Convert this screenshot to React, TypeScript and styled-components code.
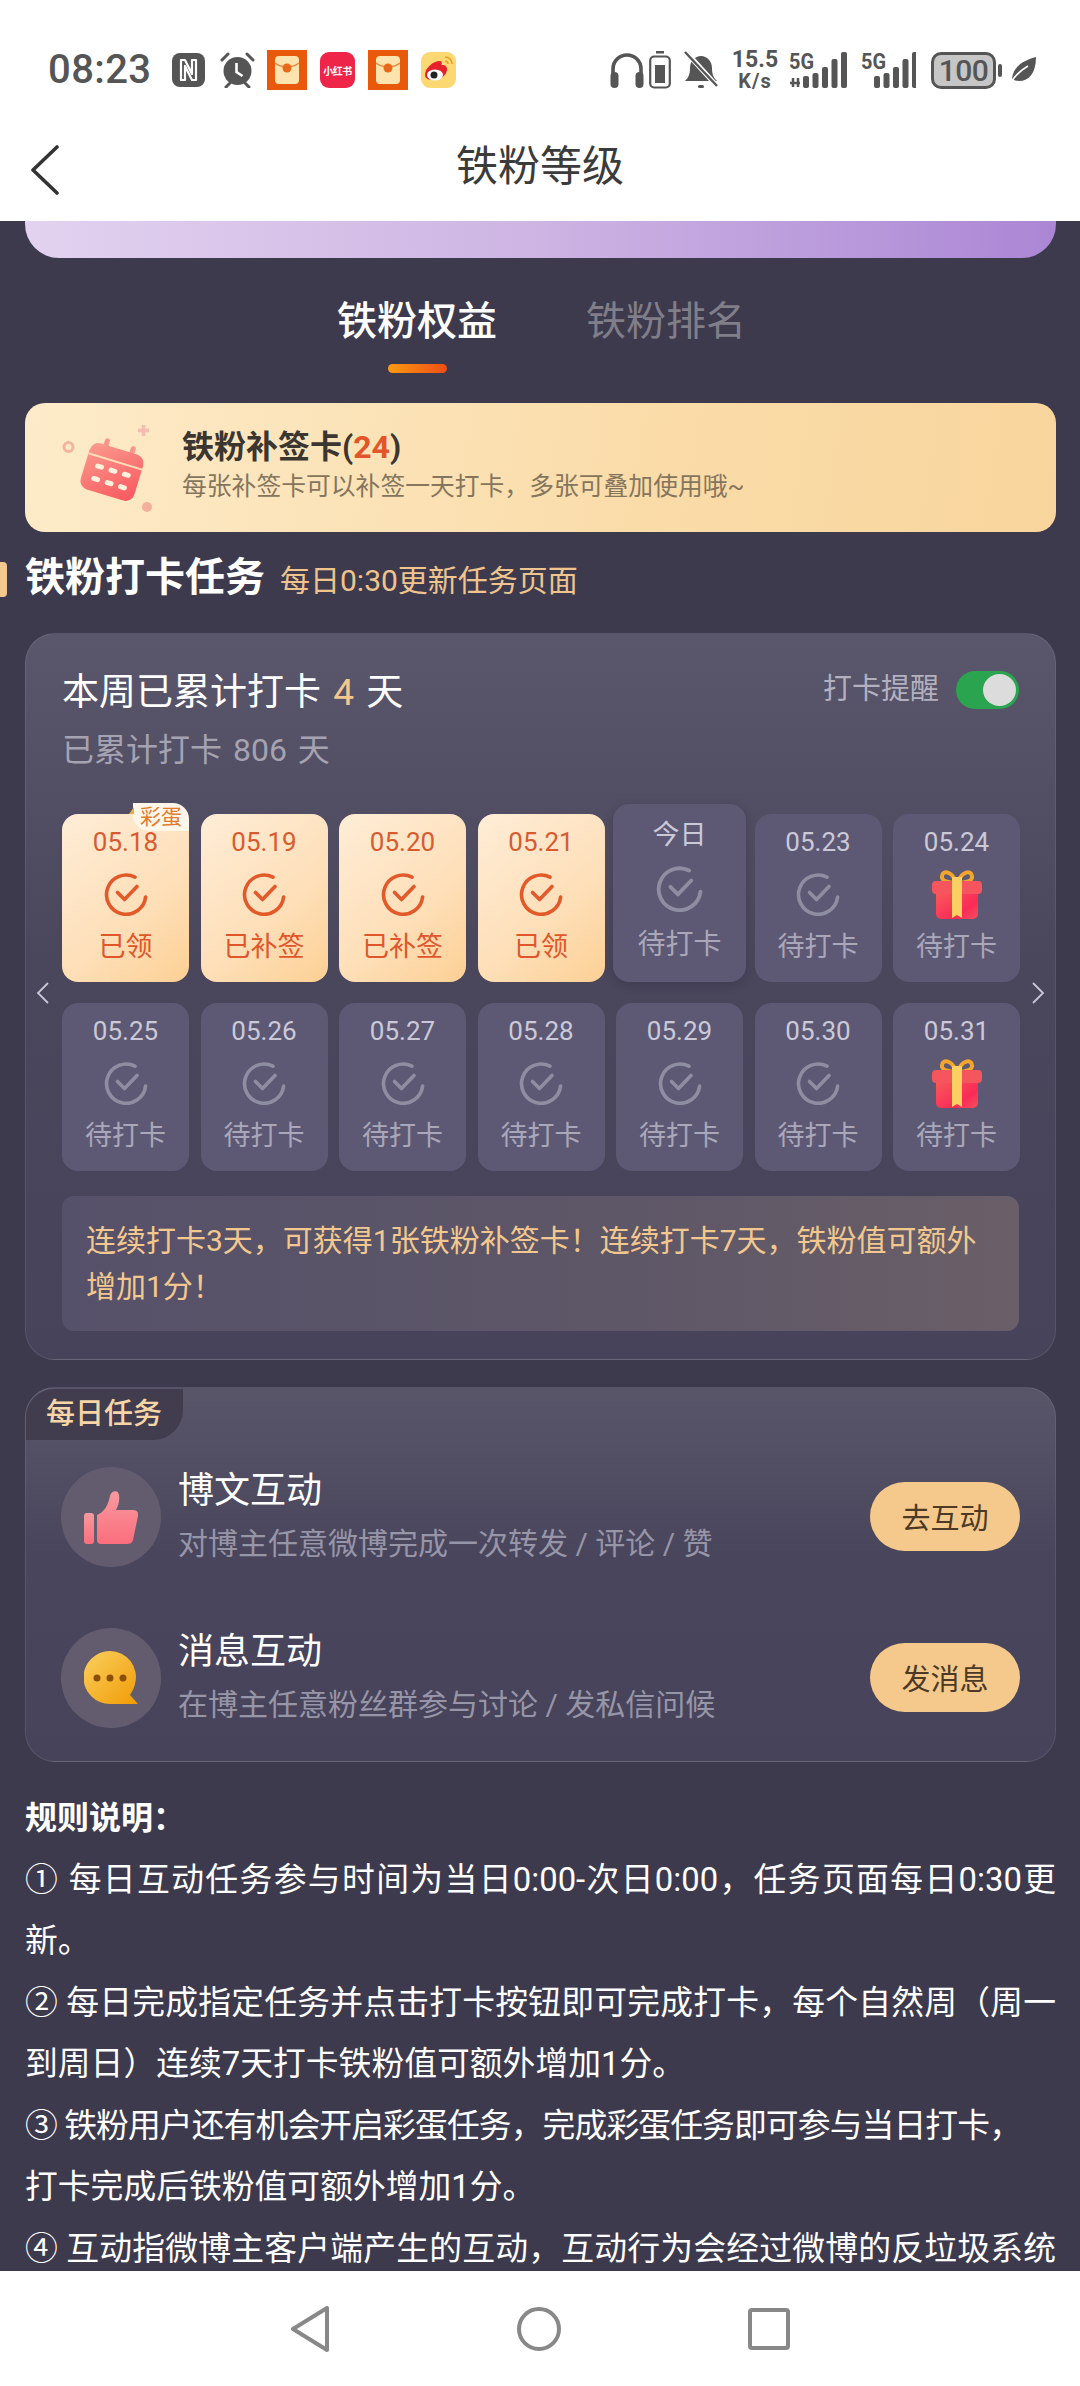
import React from 'react'
import styled, { createGlobalStyle } from 'styled-components'

const GlobalStyle = createGlobalStyle`
    html, body {
        margin: 0;
        padding: 0;
        background: #fff;
    }
    * {
        box-sizing: border-box;
    }
    body {
        font-family: Roboto, "Noto Sans CJK SC", sans-serif;
    }
`

const Page = styled.div`
    width: 1080px;
    height: 2386px;
    display: flex;
    flex-direction: column;
    overflow: hidden;
`

const StatusBar = styled.div`
    height: 113px;
    padding: 48px 44px 0 48px;
    display: flex;
    justify-content: space-between;
    align-items: flex-start;
    background: #fff;
    color: #555;
`

const StatusGroup = styled.div`
    height: 44px;
    display: flex;
    align-items: center;
`

const Clock = styled.span`
    font-size: 40px;
    line-height: 44px;
    font-weight: 500;
    width: 124px;
    letter-spacing: 0.4px;
`

const XhsIcon = styled.span`
    width: 35px;
    height: 36px;
    margin-left: 13px;
    border-radius: 9px;
    background: #ee2449;
    color: #fff;
    font-size: 10px;
    font-weight: 700;
    display: flex;
    align-items: center;
    justify-content: center;
    white-space: nowrap;
    letter-spacing: -0.5px;
`

const Speed = styled.span`
    width: 48px;
    margin: 0 10px 0 13px;
    display: flex;
    flex-direction: column;
    align-items: center;
    font-weight: 700;
`

const SpeedValue = styled.span`
    font-size: 23px;
    line-height: 22px;
`

const SpeedUnit = styled.span`
    font-size: 20px;
    line-height: 20px;
    letter-spacing: 1px;
`

const BatteryBody = styled.span`
    width: 65px;
    height: 37px;
    margin-left: 15px;
    border: 3px solid #555;
    border-radius: 10px;
    background: #c6c6c6;
    font-size: 30px;
    line-height: 31px;
    font-weight: 500;
    text-align: center;
    letter-spacing: -0.5px;
`

const BatteryNub = styled.span`
    width: 4px;
    height: 13px;
    margin: 0 9px 0 2px;
    border-radius: 2px;
    background: #555;
`

const NavHeader = styled.header`
    height: 108px;
    padding: 0 31px;
    display: grid;
    grid-template-columns: 1fr auto 1fr;
    align-items: center;
    background: #fff;
`

const NavTitle = styled.h1`
    margin: 0;
    font-size: 42px;
    line-height: 56px;
    font-weight: 400;
    color: #3b3b3b;
`

const Main = styled.main`
    flex: 1;
    min-height: 0;
    overflow: hidden;
    padding: 0 24px 0 25px;
    background: #3d3a4e;
`

const Hero = styled.div`
    height: 37px;
    border-radius: 0 0 34px 34px;
    background: linear-gradient(90deg, #e2d2ef 0%, #cdb4e3 50%, #ab86d5 100%);
`

const Tabs = styled.div`
    margin-top: 36px;
    padding-left: 312px;
    display: flex;
    gap: 89px;
`

const Tab = styled.div<{ $active?: boolean }>`
    display: flex;
    flex-direction: column;
    align-items: center;
    font-size: 40px;
    line-height: 56px;
    font-weight: ${p => (p.$active ? 500 : 400)};
    color: ${p => (p.$active ? '#fff' : '#807e88')};
`

const TabLine = styled.span`
    width: 59px;
    height: 9px;
    margin-top: 14px;
    border-radius: 5px;
    background: linear-gradient(90deg, #fb9a12, #ee4d16);
`

const Banner = styled.section`
    height: 129px;
    margin-top: 30px;
    padding: 22px 0 0 37px;
    display: flex;
    gap: 28px;
    border-radius: 20px;
    background: linear-gradient(100deg, #fdebc9 0%, #fadca9 60%, #f8d59c 100%);
`

const BannerTitle = styled.div`
    font-size: 32px;
    line-height: 44px;
    font-weight: 700;
    color: #3b3630;
    white-space: nowrap;
`

const BannerCount = styled.span`
    color: #e2552b;
`

const BannerNote = styled.div`
    margin-top: 1px;
    font-size: 24.8px;
    line-height: 34px;
    color: #86755d;
    white-space: nowrap;
`

const SectionRow = styled.div`
    position: relative;
    margin-top: 21px;
    height: 50px;
    display: flex;
    align-items: baseline;
    gap: 15px;
`

const SectionMark = styled.span`
    position: absolute;
    left: -25px;
    top: 9px;
    width: 7px;
    height: 35px;
    border-radius: 0 4px 4px 0;
    background: #f3c98d;
`

const SectionTitle = styled.h2`
    margin: 0;
    font-size: 40px;
    line-height: 50px;
    font-weight: 700;
    color: #fff;
`

const SectionNote = styled.span`
    font-size: 30px;
    color: #efc48d;
`

const Card = styled.section`
    position: relative;
    margin-top: 30px;
    padding: 34px 36px 28px;
    border: 1px solid rgba(255, 255, 255, 0.09);
    border-radius: 30px;
    background: linear-gradient(180deg, #5a566b 0%, #4a465c 45%, #47435a 100%);
`

const CardHead = styled.div`
    display: flex;
    justify-content: space-between;
    align-items: flex-start;
`

const CardTitle = styled.div`
    font-size: 37px;
    line-height: 50px;
    color: #fff;
`

const CardSub = styled.div`
    margin-top: 10px;
    font-size: 32px;
    line-height: 44px;
    color: #a5a3b2;
`

const Accent = styled.span`
    margin: 0 3px;
    color: #f3c88e;
`

const Count = styled.span`
    margin: 0 3px;
`

const Reminder = styled.div`
    display: flex;
    align-items: center;
    gap: 17px;
    font-size: 29px;
    line-height: 40px;
    color: #b3b1bf;
`

const Toggle = styled.span`
    width: 63px;
    height: 38px;
    margin-top: 3px;
    padding: 3px;
    display: flex;
    justify-content: flex-end;
    border-radius: 19px;
    background: #2aa44f;
`

const Knob = styled.span`
    width: 33px;
    height: 32px;
    border-radius: 50%;
    background: #dcdcdc;
`

const DayGrid = styled.div`
    margin-top: 42px;
    display: grid;
    grid-template-columns: repeat(7, 127px);
    grid-auto-rows: 168px;
    column-gap: 11.5px;
    row-gap: 21px;
`

const DayCell = styled.div<{ $done?: boolean; $today?: boolean }>`
    position: relative;
    padding-top: ${p => (p.$today ? 17 : 14)}px;
    margin: ${p => (p.$today ? '-10px -3px 0' : '0')};
    display: flex;
    flex-direction: column;
    align-items: center;
    border-radius: 16px;
    background: ${p => (p.$done ? 'linear-gradient(140deg, #feedd7 0%, #fedfb8 60%, #fcd094 100%)' : '#5d5975')};
    box-shadow: ${p => (p.$today ? '0 3px 10px rgba(30, 27, 45, 0.22)' : 'none')};
    z-index: ${p => (p.$today ? 1 : 0)};
`

const DayDate = styled.span<{ $done?: boolean; $today?: boolean }>`
    font-size: ${p => (p.$today ? 27 : 26)}px;
    line-height: 28px;
    color: ${p => (p.$done ? '#d65c30' : '#cbc9d8')};
`

const IconSlot = styled.span`
    height: 44px;
    margin-top: 16px;
    display: flex;
    align-items: center;
    justify-content: center;
`

const TodaySlot = styled(IconSlot)`
    height: 47px;
`

const DayLabel = styled.span<{ $done?: boolean; $today?: boolean }>`
    margin-top: ${p => (p.$today ? 16 : 14)}px;
    font-size: ${p => (p.$today ? 28 : 27)}px;
    line-height: 34px;
    color: ${p => (p.$done ? '#e0562a' : '#a9a7b9')};
`

const EggBadge = styled.span`
    position: absolute;
    top: -11px;
    right: 0;
    width: 56px;
    height: 28px;
    border-radius: 0 16px 0 16px;
    background: #fff6ea;
    font-size: 21px;
    line-height: 28px;
    text-align: center;
    color: #e47a2c;

    &::before {
        content: '';
        position: absolute;
        left: -4px;
        top: 4px;
        border-style: solid;
        border-width: 0 0 7px 5px;
        border-color: transparent transparent #e9b04a transparent;
    }
`

const PagerArrow = styled.span<{ $side: 'left' | 'right' }>`
    position: absolute;
    top: 348px;
    ${p => p.$side}: 10px;
    width: 13px;
    height: 22px;
    display: flex;
`

const TipBox = styled.div`
    margin-top: 25px;
    height: 135px;
    padding: 22px 24px 0 24px;
    border-radius: 12px;
    background: linear-gradient(90deg, #56516a 0%, #5e5767 60%, #6a5f68 100%);
    font-size: 30px;
    line-height: 46px;
    color: #f3c88e;
`

const TaskCard = styled.section`
    position: relative;
    height: 375px;
    margin-top: 27px;
    padding: 79px 35px 0;
    border: 1px solid rgba(255, 255, 255, 0.09);
    border-radius: 30px;
    background: linear-gradient(180deg, #595569 0%, #49455c 45%, #47435a 100%);
    display: flex;
    flex-direction: column;
    gap: 61px;
`

const TaskBadge = styled.span`
    position: absolute;
    top: 1px;
    left: 0;
    width: 157px;
    height: 51px;
    padding-left: 20px;
    border-radius: 28px 0 30px 0;
    background: #413d4f;
    font-size: 29px;
    line-height: 50px;
    font-weight: 500;
    color: #f8d5a6;
`

const TaskRow = styled.div`
    display: flex;
    align-items: center;
`

const TaskIcon = styled.span`
    width: 100px;
    height: 100px;
    flex: none;
    border-radius: 50%;
    background: #635c6e;
    display: flex;
    align-items: center;
    justify-content: center;
`

const TaskText = styled.div`
    flex: 1;
    margin-left: 17px;
    margin-top: -3px;
`

const TaskTitle = styled.div`
    font-size: 36px;
    line-height: 50px;
    color: #fff;
`

const TaskNote = styled.div`
    margin-top: 6px;
    font-size: 30px;
    line-height: 44px;
    color: #9795a8;
`

const TaskButton = styled.button`
    width: 150px;
    height: 69px;
    margin-top: -2px;
    border: 0;
    border-radius: 35px;
    background: #f5c98b;
    font-family: inherit;
    font-size: 29px;
    color: #4c3a26;
`

const Rules = styled.section`
    margin-top: 26px;
    font-size: 32.8px;
    line-height: 61.5px;
    color: #fff;
`

const RulesTitle = styled.div`
    font-size: 32px;
    font-weight: 700;
`

const RuleLine = styled.div<{ $fit?: 'full' | 'tight' }>`
    text-align-last: ${p => (p.$fit === 'full' ? 'justify' : 'auto')};
    letter-spacing: ${p => (p.$fit === 'tight' ? '-0.9px' : '0')};
`

const BottomBar = styled.nav`
    height: 115px;
    flex: none;
    padding: 35px 290px 0 291px;
    display: flex;
    justify-content: space-between;
    align-items: flex-start;
    background: #fff;
`

const SignalSvg = styled.svg<{ $gap: number }>`
    margin: -4px 0 0 ${p => p.$gap}px;
`

const CheckRing = ({ color, size = 44 }: { color: string; size?: number }) => (
    <svg width={size} height={size} viewBox="0 0 44 44" fill="none" stroke={color} strokeWidth="3.6" strokeLinecap="round" strokeLinejoin="round">
        <path d="M31 5.2A19.6 19.6 0 1 0 41.6 25" />
        <path d="M13.5 20.5 20.5 27.5 33 14.5" />
    </svg>
)

const Gift = () => (
    <svg width="50" height="50" viewBox="0 0 50 50" style={{ margin: '-3px 0' }}>
        <defs>
            <linearGradient id="giftBody" x1="0" y1="0" x2="1" y2="1">
                <stop offset="0" stopColor="#f8605a" />
                <stop offset="0.7" stopColor="#fb2a57" />
                <stop offset="1" stopColor="#f2505e" />
            </linearGradient>
        </defs>
        <path d="M24 13C20 2 11 1 10 7c-1 5 7 7 14 7zM26 13c4-11 13-12 14-6 1 5-7 7-14 7z" fill="none" stroke="#f4a52c" strokeWidth="4" />
        <rect x="4" y="19" width="42" height="31" rx="5" fill="url(#giftBody)" />
        <rect x="0" y="12" width="50" height="13" rx="4" fill="#f5555c" />
        <path d="M20 8h10v41l-5-3-5 3z" fill="#fbcf62" />
    </svg>
)

const Envelope = ({ first }: { first?: boolean }) => (
    <svg width="40" height="40" viewBox="0 0 40 40" style={{ marginLeft: first ? 12 : 13 }}>
        <rect width="40" height="40" fill="#e9590c" />
        <rect x="8" y="6" width="24" height="28" rx="4" fill="#fde3ad" />
        <path d="M8 13c6 5 18 5 24 0" fill="none" stroke="#e58a3c" strokeWidth="1.4" />
        <circle cx="20" cy="18" r="4.5" fill="#e9691c" />
    </svg>
)

const NfcIcon = () => (
    <svg width="33" height="34" viewBox="0 0 33 34" style={{ marginRight: 15 }}>
        <rect width="33" height="34" rx="8" fill="#555" />
        <path d="M9 7h4l7 14V7h4v20h-4l-7-14v14H9z" fill="none" stroke="#fff" strokeWidth="2.2" strokeLinejoin="round" />
    </svg>
)

const AlarmIcon = () => (
    <svg width="35" height="36" viewBox="0 0 35 36">
        <circle cx="17.5" cy="19" r="14" fill="#555" />
        <path d="M2 8 8 2M33 8l-6-6M6 35l4-4M29 35l-4-4" stroke="#555" strokeWidth="3" strokeLinecap="round" />
        <path d="M16.5 11v9l6 4" fill="none" stroke="#fff" strokeWidth="2.6" />
    </svg>
)

const WeiboIcon = () => (
    <svg width="35" height="36" viewBox="0 0 35 36" style={{ marginLeft: 13 }}>
        <rect width="35" height="36" rx="9" fill="#fbd871" />
        <path d="M4 23c0-7 8-14 15-14 2 0 2 2 1.500 4 4 0 6 2 5.500 5-1 6-7 10-13 10-5 0-9-1-9-5z" fill="#e6212b" />
        <ellipse cx="14" cy="23" rx="8" ry="5.500" fill="#fff" />
        <circle cx="13" cy="23" r="3.500" fill="#222" />
        <path d="M24 5c4 0 7 3 7 7M24 9c2 0 3 1 3 3" fill="none" stroke="#e8a02a" strokeWidth="1.6" />
    </svg>
)

const HeadphonesIcon = () => (
    <svg width="34" height="36" viewBox="0 0 34 36">
        <path d="M3 22V17a14 14 0 0 1 28 0v5" fill="none" stroke="#555" strokeWidth="3.600" />
        <rect x="0.500" y="20" width="8" height="16" rx="4" fill="#555" />
        <rect x="25.500" y="20" width="8" height="16" rx="4" fill="#555" />
    </svg>
)

const SmallBattery = () => (
    <svg width="22" height="38" viewBox="0 0 22 38" style={{ marginLeft: 5 }}>
        <rect x="7" y="0" width="8" height="2.500" fill="#555" />
        <rect x="1.200" y="5.500" width="19.600" height="31" rx="4" fill="none" stroke="#555" strokeWidth="2.200" />
        <rect x="6" y="14" width="10" height="18" fill="#555" />
    </svg>
)

const MutedBell = () => (
    <svg width="34" height="40" viewBox="0 0 34 40" style={{ marginLeft: 13 }}>
        <path d="M1 31c3-3 5-6 5-13 0-7 5-12 11-12s11 5 11 12c0 7 2 10 5 13z" fill="#555" />
        <rect x="14" y="35" width="6" height="3" rx="1.500" fill="#555" />
        <path d="M2 2 33 36" stroke="#fff" strokeWidth="5" />
        <path d="M1 2 33 36" stroke="#555" strokeWidth="2.400" />
    </svg>
)

const SignalBars = ({ bars }: { bars: number[] }) => (
    <>
        {bars.map((h, i) => (
            <rect key={i} x={i * 9.500} y={36 - h} width="6" height={h} rx="2" fill="#555" />
        ))}
    </>
)

const SignalIcon = ({ arrows }: { arrows?: boolean }) => (
    <SignalSvg $gap={arrows ? 0 : 11} width={arrows ? 61 : 55} height="42" viewBox={arrows ? '0 -4 61 42' : '0 -4 55 42'}>
        <text x="0" y="18" fontFamily="Roboto, sans-serif" fontSize="22" fontWeight="700" fill="#555" textLength="25" lengthAdjust="spacingAndGlyphs">5G</text>
        <g transform={arrows ? 'translate(14 1)' : 'translate(13 1)'}>
            <SignalBars bars={[12, 15, 21, 29, 36]} />
        </g>
        {arrows && <path d="M1 32h10M4 27v9M9 27v9" stroke="#555" strokeWidth="2.500" />}
    </SignalSvg>
)

const LeafIcon = () => (
    <svg width="25" height="26" viewBox="0 0 25 26">
        <path d="M25 0C25 16 18 24 8 24 4 24 1 22 1 21 3 8 14 3 25 0z" fill="#555" />
        <path d="M0 26C4 18 10 13 17 9" stroke="#fff" strokeWidth="1.600" fill="none" />
    </svg>
)

const CalendarIcon = () => (
    <svg width="92" height="90" viewBox="0 0 92 90" style={{ flex: 'none' }}>
        <defs>
            <linearGradient id="calBody" x1="0" y1="0" x2="1" y2="1">
                <stop offset="0" stopColor="#fb9c8e" />
                <stop offset="1" stopColor="#f9565e" />
            </linearGradient>
        </defs>
        <circle cx="6.500" cy="22" r="4.500" fill="none" stroke="#f3b5a0" strokeWidth="3" />
        <path d="M81.500 0v11M76 5.500h11" stroke="#f6bcae" strokeWidth="3.500" />
        <circle cx="85" cy="82" r="5" fill="#f4b09c" />
        <g transform="rotate(17 50 47)">
            <rect x="34" y="16" width="5" height="12" rx="2.500" fill="#f9958a" />
            <rect x="61" y="16" width="5" height="12" rx="2.500" fill="#f9958a" />
            <rect x="22" y="23" width="56" height="48" rx="9" fill="url(#calBody)" />
            <path d="M22 36h56" stroke="#fde0b6" strokeWidth="2" />
            {[32, 46, 60].map(x => (
                <React.Fragment key={x}>
                    <rect x={x} y="43" width="9" height="5" rx="2.500" fill="#fff1dc" />
                    <rect x={x} y="56" width="9" height="5" rx="2.500" fill="#fff1dc" />
                </React.Fragment>
            ))}
        </g>
    </svg>
)

const ThumbIcon = () => (
    <svg width="54" height="54" viewBox="0 0 54 54">
        <defs>
            <linearGradient id="thumbFill" x1="0" y1="0" x2="0" y2="1">
                <stop offset="0" stopColor="#f79aa0" />
                <stop offset="1" stopColor="#fb6e7c" />
            </linearGradient>
        </defs>
        <rect x="0" y="23" width="10" height="31" rx="3" fill="url(#thumbFill)" />
        <path d="M13 25c7-3 11-9 13-19 1-5 8-7 9-1 1 6-1 11-3 15h17c4 0 6 3 5 6l-5 24c-1 3-3 4-6 4H17c-3 0-4-2-4-4z" fill="url(#thumbFill)" />
    </svg>
)

const BubbleIcon = () => (
    <svg width="54" height="54" viewBox="0 0 54 54">
        <defs>
            <linearGradient id="bubbleFill" x1="0" y1="0" x2="1" y2="1">
                <stop offset="0" stopColor="#fad05f" />
                <stop offset="1" stopColor="#f19b05" />
            </linearGradient>
        </defs>
        <path d="M26 0a26 26 0 0 1 25 33c-1 4-3 8-5 11l8 9H26A26 26 0 0 1 26 0z" fill="url(#bubbleFill)" />
        <circle cx="13" cy="27" r="3.500" fill="#8c4f05" />
        <circle cx="26" cy="27" r="3.500" fill="#8c4f05" />
        <circle cx="39" cy="27" r="3.500" fill="#8c4f05" />
    </svg>
)

const BackChevron = () => (
    <svg width="28" height="50" viewBox="0 0 28 50" fill="none" stroke="#333" strokeWidth="3.600" strokeLinecap="round" strokeLinejoin="round" style={{ marginTop: 6 }}>
        <path d="M26 2 2 25l24 23" />
    </svg>
)

const Arrow = ({ dir }: { dir: 'left' | 'right' }) => (
    <svg width="13" height="22" viewBox="0 0 13 22" fill="none" stroke="#c9c7d6" strokeWidth="1.800">
        <path d={dir === 'left' ? 'M12 1 2 11l10 10' : 'M1 1l10 10L1 21'} />
    </svg>
)

type Day = { date: string; label: string; done?: boolean; today?: boolean; gift?: boolean; egg?: boolean }

const pending = '待打卡'
const days: Day[] = [
    { date: '05.18', label: '已领', done: true, egg: true },
    { date: '05.19', label: '已补签', done: true },
    { date: '05.20', label: '已补签', done: true },
    { date: '05.21', label: '已领', done: true },
    { date: '今日', label: pending, today: true },
    { date: '05.23', label: pending },
    { date: '05.24', label: pending, gift: true },
    { date: '05.25', label: pending },
    { date: '05.26', label: pending },
    { date: '05.27', label: pending },
    { date: '05.28', label: pending },
    { date: '05.29', label: pending },
    { date: '05.30', label: pending },
    { date: '05.31', label: pending, gift: true },
]

// full-width punctuation, as on the page
const bannerNote = '每张补签卡可以补签一天打卡\uFF0C多张可叠加使用哦~'
const tipText = '连续打卡3天\uFF0C可获得1张铁粉补签卡\uFF01连续打卡7天\uFF0C铁粉值可额外增加1分\uFF01'
const rulesTitle = '规则说明\uFF1A'

// one entry per line on screen, so the breaks fall where the page has them
const ruleLines: { text: string; fit?: 'full' | 'tight' }[] = [
    { text: '① 每日互动任务参与时间为当日0:00-次日0:00\uFF0C任务页面每日0:30更', fit: 'full' },
    { text: '新。' },
    { text: '② 每日完成指定任务并点击打卡按钮即可完成打卡\uFF0C每个自然周\uFF08周一', fit: 'full' },
    { text: '到周日\uFF09连续7天打卡铁粉值可额外增加1分。' },
    { text: '③ 铁粉用户还有机会开启彩蛋任务\uFF0C完成彩蛋任务即可参与当日打卡\uFF0C', fit: 'tight' },
    { text: '打卡完成后铁粉值可额外增加1分。' },
    { text: '④ 互动指微博主客户端产生的互动\uFF0C互动行为会经过微博的反垃圾系统', fit: 'full' },
]

export default function App() {
    return (
        <Page>
            <GlobalStyle />
            <StatusBar>
                <StatusGroup>
                    <Clock>08:23</Clock>
                    <NfcIcon />
                    <AlarmIcon />
                    <Envelope first />
                    <XhsIcon>小红书</XhsIcon>
                    <Envelope />
                    <WeiboIcon />
                </StatusGroup>
                <StatusGroup>
                    <HeadphonesIcon />
                    <SmallBattery />
                    <MutedBell />
                    <Speed>
                        <SpeedValue>15.5</SpeedValue>
                        <SpeedUnit>K/s</SpeedUnit>
                    </Speed>
                    <SignalIcon arrows />
                    <SignalIcon />
                    <BatteryBody>100</BatteryBody>
                    <BatteryNub />
                    <LeafIcon />
                </StatusGroup>
            </StatusBar>
            <NavHeader>
                <BackChevron />
                <NavTitle>铁粉等级</NavTitle>
            </NavHeader>
            <Main>
                <Hero />
                <Tabs>
                    <Tab $active>
                        铁粉权益
                        <TabLine />
                    </Tab>
                    <Tab>铁粉排名</Tab>
                </Tabs>
                <Banner>
                    <CalendarIcon />
                    <div>
                        <BannerTitle>
                            铁粉补签卡(<BannerCount>24</BannerCount>)
                        </BannerTitle>
                        <BannerNote>{bannerNote}</BannerNote>
                    </div>
                </Banner>
                <SectionRow>
                    <SectionMark />
                    <SectionTitle>铁粉打卡任务</SectionTitle>
                    <SectionNote>每日0:30更新任务页面</SectionNote>
                </SectionRow>
                <Card>
                    <CardHead>
                        <div>
                            <CardTitle>
                                本周已累计打卡 <Accent>4</Accent> 天
                            </CardTitle>
                            <CardSub>
                                已累计打卡 <Count>806</Count> 天
                            </CardSub>
                        </div>
                        <Reminder>
                            打卡提醒
                            <Toggle>
                                <Knob />
                            </Toggle>
                        </Reminder>
                    </CardHead>
                    <DayGrid>
                        {days.map(d => {
                            const Slot = d.today ? TodaySlot : IconSlot
                            return (
                                <DayCell key={d.date} $done={d.done} $today={d.today}>
                                    {d.egg && <EggBadge>彩蛋</EggBadge>}
                                    <DayDate $done={d.done} $today={d.today}>{d.date}</DayDate>
                                    <Slot>
                                        {d.gift ? <Gift /> : <CheckRing color={d.done ? '#e2592a' : '#8f8da1'} size={d.today ? 47 : 44} />}
                                    </Slot>
                                    <DayLabel $done={d.done} $today={d.today}>{d.label}</DayLabel>
                                </DayCell>
                            )
                        })}
                    </DayGrid>
                    <PagerArrow $side="left">
                        <Arrow dir="left" />
                    </PagerArrow>
                    <PagerArrow $side="right">
                        <Arrow dir="right" />
                    </PagerArrow>
                    <TipBox>{tipText}</TipBox>
                </Card>
                <TaskCard>
                    <TaskBadge>每日任务</TaskBadge>
                    <TaskRow>
                        <TaskIcon>
                            <ThumbIcon />
                        </TaskIcon>
                        <TaskText>
                            <TaskTitle>博文互动</TaskTitle>
                            <TaskNote>对博主任意微博完成一次转发 / 评论 / 赞</TaskNote>
                        </TaskText>
                        <TaskButton>去互动</TaskButton>
                    </TaskRow>
                    <TaskRow>
                        <TaskIcon>
                            <BubbleIcon />
                        </TaskIcon>
                        <TaskText>
                            <TaskTitle>消息互动</TaskTitle>
                            <TaskNote>在博主任意粉丝群参与讨论 / 发私信问候</TaskNote>
                        </TaskText>
                        <TaskButton>发消息</TaskButton>
                    </TaskRow>
                </TaskCard>
                <Rules>
                    <RulesTitle>{rulesTitle}</RulesTitle>
                    {ruleLines.map(l => (
                        <RuleLine key={l.text} $fit={l.fit}>{l.text}</RuleLine>
                    ))}
                </Rules>
            </Main>
            <BottomBar>
                <svg width="38" height="46" viewBox="0 0 38 46" fill="none" stroke="#888" strokeWidth="4" strokeLinejoin="round">
                    <path d="M36 2v42L2 23z" />
                </svg>
                <svg width="44" height="46" viewBox="0 0 44 46" fill="none" stroke="#888" strokeWidth="4">
                    <circle cx="22" cy="23" r="20" />
                </svg>
                <svg width="42" height="46" viewBox="0 0 42 46" fill="none" stroke="#888" strokeWidth="4" strokeLinejoin="round">
                    <rect x="2" y="4" width="38" height="38" rx="2" />
                </svg>
            </BottomBar>
        </Page>
    )
}
